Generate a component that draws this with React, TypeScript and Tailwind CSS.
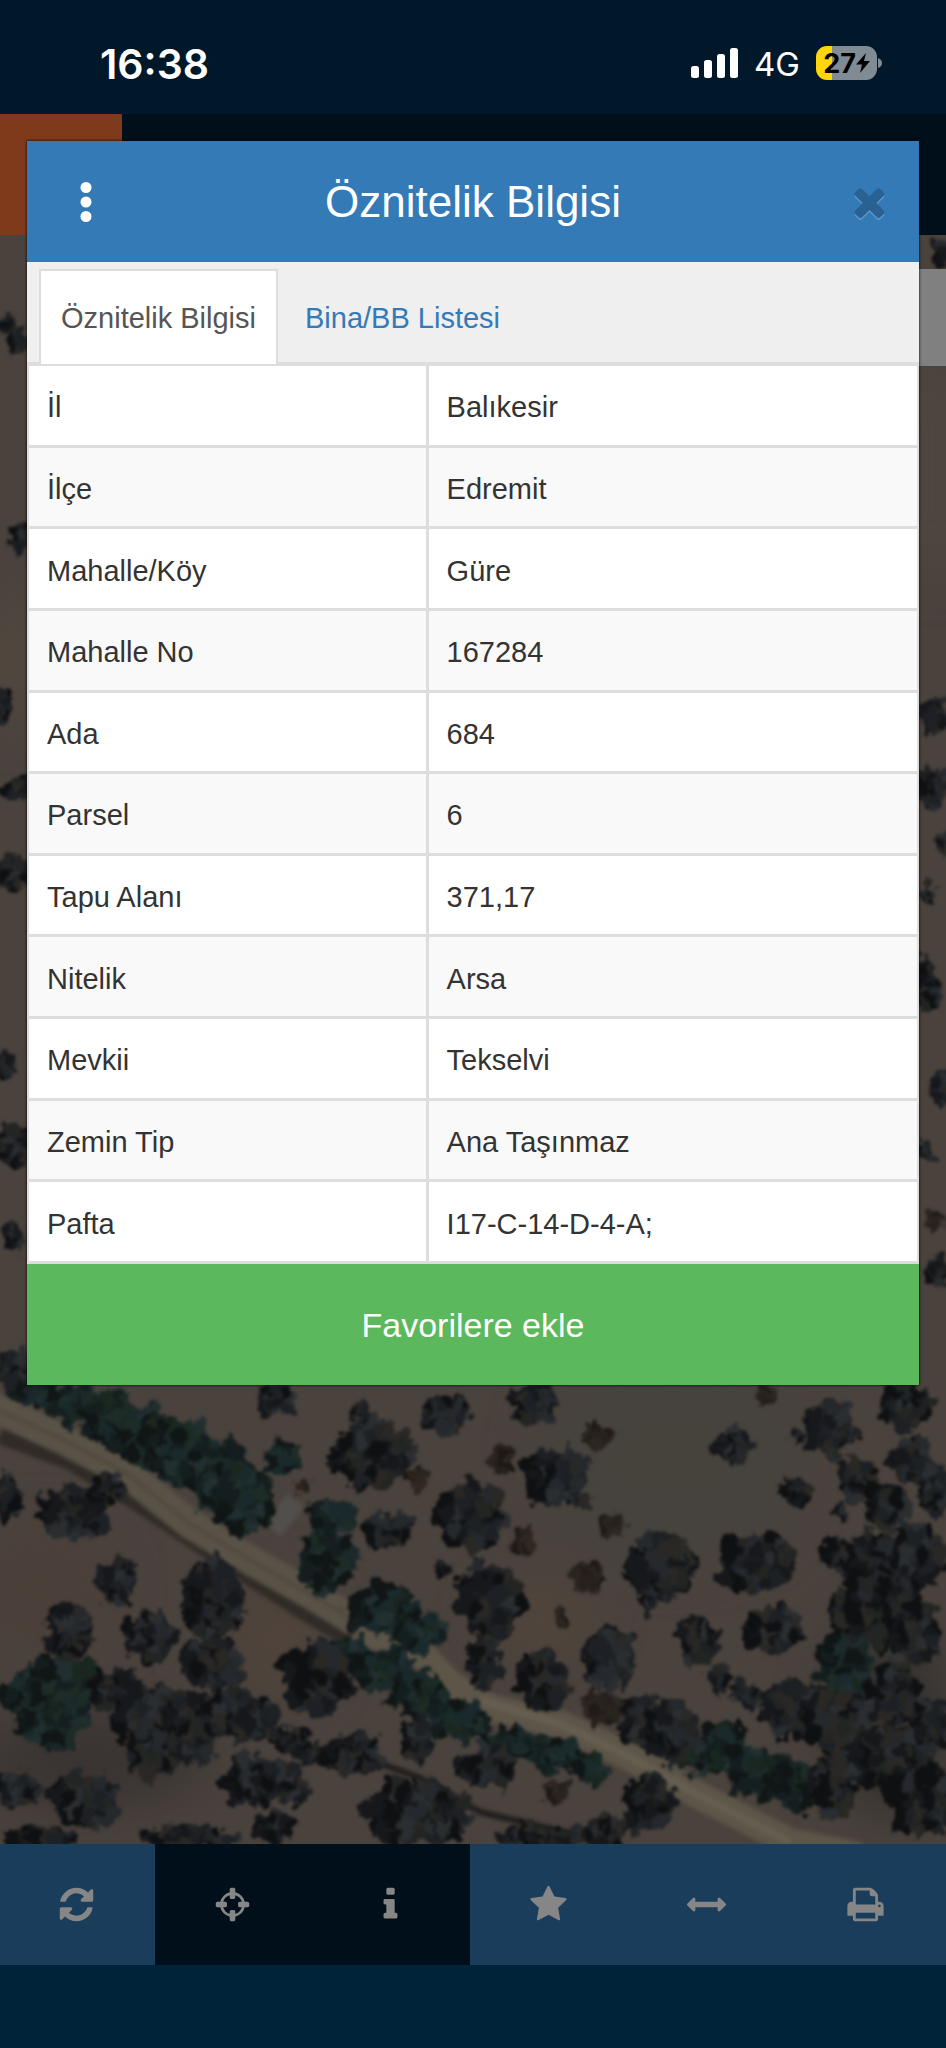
import { useState } from "react";

const rows = [
  { label: "İl", value: "Balıkesir" },
  { label: "İlçe", value: "Edremit" },
  { label: "Mahalle/Köy", value: "Güre" },
  { label: "Mahalle No", value: "167284" },
  { label: "Ada", value: "684" },
  { label: "Parsel", value: "6" },
  { label: "Tapu Alanı", value: "371,17" },
  { label: "Nitelik", value: "Arsa" },
  { label: "Mevkii", value: "Tekselvi" },
  { label: "Zemin Tip", value: "Ana Taşınmaz" },
  { label: "Pafta", value: "I17-C-14-D-4-A;" },
];

const icons = {
  refresh:
    "M1639 1056q0 5-1 7-64 268-268 434.500t-478 166.500q-146 0-282.500-55t-243.500-157l-129 129q-19 19-45 19t-45-19-19-45v-448q0-26 19-45t45-19h448q26 0 45 19t19 45-19 45l-137 137q71 66 161 102t187 36q134 0 250-65t186-179q11-17 53-117 8-23 30-23h192q13 0 22.500 9.500t9.500 22.500zm25-800v448q0 26-19 45t-45 19h-448q-26 0-45-19t-19-45 19-45l138-138q-148-137-349-137-134 0-250 65t-186 179q-11 17-53 117-8 23-30 23h-199q-13 0-22.500-9.500t-9.500-22.500v-7q65-268 270-434.500t480-166.500q146 0 284 55.500t245 156.500l130-129q19-19 45-19t45 19 19 45z",
  crosshairs:
    "M1325 1024h-109q-26 0-45-19t-19-45v-128q0-26 19-45t45-19h109q-32-108-112.500-188.500t-188.500-112.500v109q0 26-19 45t-45 19h-128q-26 0-45-19t-19-45v-109q-108 32-188.500 112.500t-112.500 188.500h109q26 0 45 19t19 45v128q0 26-19 45t-45 19h-109q32 108 112.500 188.500t188.500 112.500v-109q0-26 19-45t45-19h128q26 0 45 19t19 45v109q108-32 188.500-112.500t112.500-188.500zm339-192v128q0 26-19 45t-45 19h-143q-37 161-154.500 278.500t-278.500 154.500v143q0 26-19 45t-45 19h-128q-26 0-45-19t-19-45v-143q-161-37-278.500-154.500t-154.500-278.500h-143q-26 0-45-19t-19-45v-128q0-26 19-45t45-19h143q37-161 154.500-278.500t278.500-154.500v-143q0-26 19-45t45-19h128q26 0 45 19t19 45v143q161 37 278.500 154.500t154.500 278.500h143q26 0 45 19t19 45z",
  info: "M1216 1344v128q0 26-19 45t-45 19h-512q-26 0-45-19t-19-45v-128q0-26 19-45t45-19h64v-384h-64q-26 0-45-19t-19-45v-128q0-26 19-45t45-19h384q26 0 45 19t19 45v576h64q26 0 45 19t19 45zm-128-1152v192q0 26-19 45t-45 19h-256q-26 0-45-19t-19-45v-192q0-26 19-45t45-19h256q26 0 45 19t19 45z",
  star: "M1728 647q0 22-26 48l-363 354 86 500q1 7 1 20 0 21-10.500 35.500t-30.500 14.500q-19 0-40-12l-449-236-449 236q-22 12-40 12-21 0-31.500-14.500t-10.500-35.500q0-6 2-20l86-500-364-354q-25-27-25-48 0-37 56-46l502-73 225-455q19-41 49-41t49 41l225 455 502 73q56 9 56 46z",
  arrows:
    "M1792 896q0 26-19 45l-256 256q-19 19-45 19t-45-19-19-45v-128h-1024v128q0 26-19 45t-45 19-45-19l-256-256q-19-19-19-45t19-45l256-256q19-19 45-19t45 19 19 45v128h1024v-128q0-26 19-45t45-19 45 19l256 256q19 19 19 45z",
  print:
    "M448 1536h896v-256h-896v256zm0-640h896v-384h-160q-40 0-68-28t-28-68v-160h-640v640zm1152 64q0-26-19-45t-45-19-45 19-19 45 19 45 45 19 45-19 19-45zm128 0v416q0 13-9.500 22.500t-22.500 9.500h-224v160q0 40-28 68t-68 28h-960q-40 0-68-28t-28-68v-160h-224q-13 0-22.500-9.500t-9.500-22.500v-416q0-79 56.500-135.500t135.500-56.500h64v-544q0-40 28-68t68-28h672q40 0 88 20t76 48l152 152q28 28 48 76t20 88v256h64q79 0 135.500 56.500t56.500 135.500z",
  close:
    "M1490 1322q0 40-28 68l-136 136q-28 28-68 28t-68-28l-294-294-294 294q-28 28-68 28t-68-28l-136-136q-28-28-28-68t28-68l294-294-294-294q-28-28-28-68t28-68l136-136q28-28 68-28t68 28l294 294 294-294q28-28 68-28t68 28l136 136q28 28 28 68t-28 68l-294 294 294 294q28 28 28 68z",
};

const tools = [
  { label: "Yenile", icon: icons.refresh, dark: false },
  { label: "Konum", icon: icons.crosshairs, dark: true },
  { label: "Bilgi", icon: icons.info, dark: true },
  { label: "Favoriler", icon: icons.star, dark: false },
  { label: "Ölçüm", icon: icons.arrows, dark: false },
  { label: "Yazdır", icon: icons.print, dark: false },
];

// centre x, centre y, radius x, radius y
const trees = [
  [370, 1453, 42, 36], [358, 1410, 11, 10], [447, 1415, 28, 22], [277, 1400, 20, 18],
  [388, 1530, 27, 20], [472, 1516, 36, 38], [490, 1600, 36, 42], [443, 1570, 8, 8],
  [75, 1513, 38, 28], [110, 1488, 16, 14], [6, 1497, 18, 26], [115, 1580, 26, 23],
  [68, 1632, 24, 32], [150, 1637, 28, 28], [213, 1597, 32, 44], [213, 1663, 34, 30],
  [317, 1678, 36, 40], [113, 1690, 26, 24], [145, 1715, 34, 34], [190, 1720, 34, 32],
  [235, 1715, 38, 26], [260, 1720, 20, 24], [155, 1755, 32, 24], [190, 1752, 24, 14],
  [253, 1783, 34, 26], [287, 1783, 24, 22], [290, 1740, 20, 14], [313, 1754, 20, 12],
  [353, 1755, 32, 24], [418, 1740, 17, 25], [417, 1812, 58, 36], [468, 1765, 16, 14],
  [85, 1800, 36, 30], [18, 1790, 26, 20], [40, 1838, 40, 14], [190, 1838, 56, 14],
  [273, 1828, 22, 18], [533, 1403, 28, 22], [556, 1477, 36, 30], [576, 1500, 14, 9],
  [663, 1567, 38, 34], [648, 1603, 10, 10], [733, 1445, 21, 17], [796, 1435, 7, 7],
  [830, 1430, 26, 30], [857, 1477, 22, 24], [798, 1490, 17, 16], [906, 1407, 32, 24],
  [910, 1460, 22, 26], [935, 1490, 18, 30], [886, 1505, 26, 26], [840, 1510, 9, 9],
  [755, 1563, 42, 31], [773, 1630, 34, 25], [697, 1643, 22, 27], [718, 1677, 14, 14],
  [610, 1658, 29, 31], [542, 1680, 28, 32], [485, 1665, 20, 30], [640, 1720, 22, 30],
  [672, 1730, 30, 30], [745, 1695, 18, 15], [790, 1707, 32, 32], [840, 1555, 18, 20],
  [873, 1568, 30, 40], [918, 1555, 30, 36], [848, 1615, 22, 28], [880, 1610, 36, 40],
  [916, 1632, 26, 34], [893, 1693, 26, 36], [930, 1722, 22, 28], [836, 1722, 36, 34],
  [890, 1760, 44, 34], [920, 1800, 36, 36], [833, 1785, 28, 36], [650, 1805, 28, 30],
  [490, 1765, 24, 26], [540, 1838, 50, 14], [605, 1832, 26, 18],
  [8, 326, 10, 12], [18, 341, 12, 16], [20, 537, 10, 20], [2, 705, 10, 22],
  [18, 790, 16, 14], [12, 873, 20, 20], [5, 1065, 12, 20], [12, 1145, 22, 22],
  [15, 1237, 12, 14], [15, 1370, 26, 20], [941, 250, 12, 14], [936, 716, 14, 22],
  [930, 788, 16, 24], [942, 845, 6, 10], [926, 895, 10, 12], [926, 985, 15, 32],
  [941, 1086, 12, 20], [924, 1151, 12, 12], [938, 1272, 14, 18],
];

const hedges = [
  [40, 1395, 28, 18], [75, 1405, 28, 22], [110, 1420, 30, 28], [145, 1435, 34, 32],
  [180, 1450, 34, 36], [215, 1475, 36, 38], [245, 1500, 32, 36], [280, 1458, 20, 18],
  [333, 1517, 28, 20], [328, 1560, 34, 30], [383, 1610, 36, 28], [420, 1632, 30, 20],
  [347, 1653, 26, 18], [385, 1668, 34, 24], [420, 1695, 34, 26], [460, 1722, 34, 22],
  [510, 1743, 32, 18], [555, 1755, 34, 20], [592, 1768, 20, 16], [30, 1695, 30, 28],
  [65, 1690, 38, 40], [50, 1725, 34, 26], [700, 1755, 26, 18], [723, 1745, 26, 28],
  [763, 1775, 34, 26], [800, 1785, 34, 28], [846, 1665, 30, 36], [680, 1745, 24, 24],
];

const shrubs = [
  [598, 1435, 15, 12], [503, 1461, 14, 15], [614, 1525, 15, 12], [523, 1543, 15, 15],
  [588, 1577, 19, 17], [560, 1617, 10, 8], [766, 1395, 14, 9], [417, 1477, 12, 11],
  [601, 1707, 26, 18], [300, 1488, 10, 8], [555, 1792, 18, 12], [935, 1222, 9, 12],
];

const treeColors = ["#0f1012", "#17181b", "#1d2024", "#25292d", "#2a2e31", "#232523", "#2a2825"];
const hedgeColors = ["#101515", "#151e1f", "#1a292b", "#1d2c26", "#212f30", "#1a2720"];
const shrubColors = ["#1e1916", "#2a241f", "#302822", "#26211d"];

function crown(items: number[][], colors: string[], seed: number) {
  let s = seed;
  const rand = () => {
    s = (s * 16807) % 2147483647;
    return s / 2147483647;
  };
  return items.flatMap(([x, y, rx, ry], i) => {
    const count = Math.round(10 + (rx * ry) / 24);
    const size = Math.min(rx, ry);
    const leaves = Array.from({ length: count }, (_, n) => {
      const angle = rand() * Math.PI * 2;
      const dist = Math.sqrt(rand()) * 0.88;
      // the sun stands to the right, so the left edge stays darkest
      const shade = Math.cos(angle) * dist < -0.45 ? 2 : colors.length;
      return (
        <ellipse
          key={`${i}-${n}`}
          cx={x + Math.cos(angle) * dist * rx}
          cy={y + Math.sin(angle) * dist * ry}
          rx={size * (0.08 + rand() * 0.12) + 2}
          ry={size * (0.1 + rand() * 0.16) + 2}
          fill={colors[Math.floor(rand() * shade)]}
        />
      );
    });
    return [
      <ellipse key={i} cx={x} cy={y} rx={rx * 0.86} ry={ry * 0.86} fill={colors[2]} />,
      ...leaves,
    ];
  });
}

function SatelliteMap() {
  return (
    <svg
      className="block h-full w-full"
      viewBox="0 235 946 1609"
      preserveAspectRatio="xMidYMax slice"
      aria-hidden="true"
    >
      <defs>
        <filter id="rough" x="-5%" y="-5%" width="110%" height="110%" colorInterpolationFilters="sRGB">
          <feTurbulence type="fractalNoise" baseFrequency="0.07" numOctaves="3" seed="4" />
          <feDisplacementMap in="SourceGraphic" scale="20" xChannelSelector="R" yChannelSelector="G" />
          <feGaussianBlur stdDeviation="1.600" />
        </filter>
        <filter id="soft" x="-60%" y="-60%" width="220%" height="220%" colorInterpolationFilters="sRGB">
          <feGaussianBlur stdDeviation="26" />
        </filter>
        <filter id="edge" colorInterpolationFilters="sRGB">
          <feGaussianBlur stdDeviation="2" />
        </filter>
      </defs>
      <rect y="235" width="946" height="1609" fill="#4a423d" />
      <g filter="url(#soft)">
        <ellipse cx="670" cy="1460" rx="130" ry="100" fill="#46433d" />
        <ellipse cx="40" cy="1590" rx="70" ry="60" fill="#4b4039" />
        <ellipse cx="280" cy="1640" rx="40" ry="60" fill="#50443b" />
        <ellipse cx="540" cy="1620" rx="50" ry="30" fill="#52463b" />
        <ellipse cx="90" cy="1760" rx="120" ry="50" fill="#3a3432" />
        <ellipse cx="890" cy="1720" rx="60" ry="100" fill="#35322f" />
        <rect y="600" width="30" height="120" fill="#574d42" />
        <rect x="916" y="370" width="30" height="200" fill="#544a42" />
      </g>
      <g fill="none" filter="url(#edge)" strokeLinejoin="round">
        <path d="M0 1436L70 1462 140 1505 210 1552 300 1610 350 1640" stroke="#302b26" strokeWidth="16" />
        <path d="M-10 1406L60 1438 125 1472 190 1524 250 1560 310 1594 356 1622" stroke="#595247" strokeWidth="30" />
        <path d="M-10 1406L60 1438 125 1472 190 1524 250 1560 310 1594 356 1622" stroke="#4b463c" strokeWidth="3" />
        <path d="M272 1530L296 1500" stroke="#514e4c" strokeWidth="22" />
        <path d="M356 1628L420 1652 450 1684 490 1708 560 1724 620 1752 700 1796 790 1842 860 1856" stroke="#5c5548" strokeWidth="28" />
        <path d="M480 1700L560 1724 620 1752 700 1796 790 1842" stroke="#665f51" strokeWidth="8" />
        <path d="M330 1745L420 1778 480 1812 580 1836" stroke="#1d1b1b" strokeWidth="6" />
      </g>
      <g filter="url(#rough)">
        {crown(shrubs, shrubColors, 31)}
        {crown(hedges, hedgeColors, 77)}
        {crown(trees, treeColors, 19)}
      </g>
    </svg>
  );
}

function Icon({ path, className }: { path: string; className: string }) {
  return (
    <svg viewBox="0 0 1792 1792" fill="currentColor" className={className} aria-hidden="true">
      <path d={path} />
    </svg>
  );
}

function StatusBar() {
  return (
    <div className="flex h-[114px] items-center justify-between bg-[#00182a] pr-16 pl-[100px] pt-3 text-white">
      <span className="pt-0.5 font-[Inter,sans-serif] text-[41px] leading-none font-semibold">16:38</span>
      <div className="flex items-center gap-4">
        <svg viewBox="0 0 47 30" fill="currentColor" className="h-[30px] w-[47px]" aria-hidden="true">
          <rect y="18" width="8" height="12" rx="2.500" />
          <rect x="13" y="12" width="8" height="18" rx="2.500" />
          <rect x="26" y="6" width="8" height="24" rx="2.500" />
          <rect x="39" width="8" height="30" rx="2.500" />
        </svg>
        <span className="pt-0.5 font-[Inter,sans-serif] text-[33px] leading-none">4G</span>
        <div className="flex items-center gap-px">
          <div className="flex h-[34px] w-[61px] items-center justify-center rounded-[11px] bg-linear-to-r from-[#ffd60a] from-27% to-[#808b94] to-27% text-black">
            <span className="font-[Inter,sans-serif] text-[27px] leading-none font-bold">27</span>
            <svg viewBox="0 0 14 20" fill="currentColor" className="h-5 w-3.5" aria-hidden="true">
              <path d="M10 0L0 11.500h6L4 20 14 8H8z" />
            </svg>
          </div>
          <svg viewBox="0 0 4 10" className="h-2.5 w-1" aria-hidden="true">
            <path d="M0 0q4 1.500 4 5t-4 5z" fill="#808b94" />
          </svg>
        </div>
      </div>
    </div>
  );
}

function ParcelDialog() {
  const [tab, setTab] = useState("info");

  return (
    <div
      role="dialog"
      aria-labelledby="dialog-title"
      className="absolute inset-x-[27px] top-[141px] bg-white shadow-[0_0_2px_1px_rgba(0,0,0,0.5)]"
    >
      <header className="flex h-[121px] items-center justify-between bg-[#337ab7] px-[27px] text-white">
        <button type="button" aria-label="Menü" className="flex h-16 w-[63px] items-center justify-center">
          <svg viewBox="0 0 12 40" fill="currentColor" className="h-10 w-3" aria-hidden="true">
            <circle cx="6" cy="5.500" r="5.500" />
            <circle cx="6" cy="20" r="5.500" />
            <circle cx="6" cy="34.500" r="5.500" />
          </svg>
        </button>
        <h1 id="dialog-title" className="text-[44px] leading-none">
          Öznitelik Bilgisi
        </h1>
        <button type="button" aria-label="Kapat" className="flex h-16 w-[63px] items-center justify-end text-[#296292]">
          <Icon path={icons.close} className="size-[45px] drop-shadow-[0_2px_0_#5c95c5]" />
        </button>
      </header>

      <nav role="tablist" className="flex h-[102px] items-end border-b-2 border-[#ddd] bg-[#efefef] pl-3 text-[29px]">
        <button
          type="button"
          role="tab"
          aria-selected={tab === "info"}
          onClick={() => setTab("info")}
          className="-mb-0.5 h-[95px] border-2 border-b-0 border-[#ddd] bg-white px-5 pt-0.5 text-[#555]"
        >
          Öznitelik Bilgisi
        </button>
        <button
          type="button"
          role="tab"
          aria-selected={tab === "list"}
          onClick={() => setTab("list")}
          className="h-[93px] px-[27px] pt-1.5 text-[#337ab7]"
        >
          Bina/BB Listesi
        </button>
      </nav>

      <table className="h-[900px] w-full table-fixed border-separate border-spacing-0 border-2 border-b-0 border-[#ddd] text-[29px] leading-10 text-[#333]">
        <tbody>
          {rows.map((row) => (
            <tr key={row.label} className="even:bg-[#f9f9f9]">
              <th
                scope="row"
                className="w-[45%] border-r-[3px] border-b-[3px] border-[#ddd] px-[18px] pt-1 text-left font-normal"
              >
                {row.label}
              </th>
              <td className="border-b-[3px] border-[#ddd] px-[18px] pt-1">{row.value}</td>
            </tr>
          ))}
        </tbody>
      </table>

      <button type="button" className="h-[121px] w-full bg-[#5cb85c] pt-0.5 text-[34px] text-white">
        Favorilere ekle
      </button>
    </div>
  );
}

export default function App() {
  return (
    <div className="relative flex min-h-screen flex-col bg-[#00233a] font-['Liberation_Sans',Arial,sans-serif]">
      <StatusBar />
      <div className="flex h-[121px] bg-[#000f1a]">
        <div className="w-[122px] bg-[#7f3a1c]" />
      </div>

      <main className="relative min-h-0 flex-1 overflow-hidden">
        <div className="absolute inset-0">
          <SatelliteMap />
        </div>
        <div className="absolute top-[34px] right-0 h-[97px] w-40 bg-[#808080]" />
      </main>

      <div className="grid h-[121px] grid-cols-[155fr_157fr_158fr_158fr_158fr_160fr] text-[#868686]">
        {tools.map((tool) => (
          <button
            key={tool.label}
            type="button"
            aria-label={tool.label}
            className={`flex items-center justify-center pr-0.5 ${tool.dark ? "bg-[#000f1a]" : "bg-[#1b3d5c]"}`}
          >
            <Icon path={tool.icon} className="size-[39px]" />
          </button>
        ))}
      </div>
      <div className="h-[83px]" />

      <ParcelDialog />
    </div>
  );
}
